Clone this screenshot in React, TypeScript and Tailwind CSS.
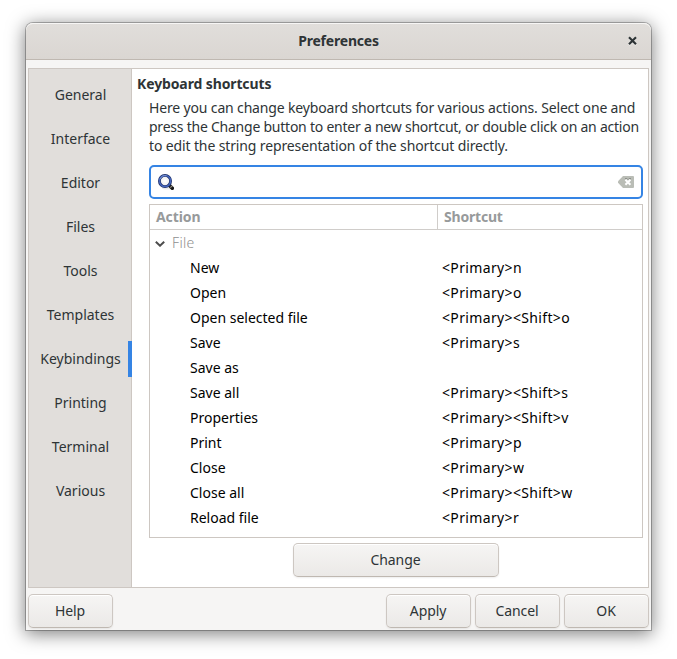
const tabs = ['General', 'Interface', 'Editor', 'Files', 'Tools', 'Templates', 'Keybindings', 'Printing', 'Terminal', 'Various'];

const shortcuts: [string, string][] = [
  ['New', '<Primary>n'],
  ['Open', '<Primary>o'],
  ['Open selected file', '<Primary><Shift>o'],
  ['Save', '<Primary>s'],
  ['Save as', ''],
  ['Save all', '<Primary><Shift>s'],
  ['Properties', '<Primary><Shift>v'],
  ['Print', '<Primary>p'],
  ['Close', '<Primary>w'],
  ['Close all', '<Primary><Shift>w'],
  ['Reload file', '<Primary>r'],
];

function Button({ label, className = 'w-[85px]' }: { label: string; className?: string }) {
  return (
    <button
      className={`flex h-[34px] shrink-0 items-center justify-center rounded-[5px] border border-[#cdc7c2] border-b-[#bfb8b1] bg-linear-to-b from-[#f6f5f4] to-[#ebe9e7] pr-px pb-[2px] tracking-[-0.1px] shadow-[inset_0_1px_0_#fff,0_1px_2px_rgba(0,0,0,0.07)] ${className}`}
    >
      {label}
    </button>
  );
}

function SearchIcon() {
  return (
    <svg width="16" height="16" viewBox="0 0 16 16">
      <defs>
        <radialGradient id="glass">
          <stop offset="0" stopColor="#fff" />
          <stop offset="0.65" stopColor="#f2f2f2" />
          <stop offset="1" stopColor="#c4c6cc" />
        </radialGradient>
      </defs>
      <ellipse cx="9" cy="14.6" rx="5" ry="1" fill="#000" opacity="0.08" />
      <path d="M11 11l3.3 3.3" stroke="#171717" strokeWidth="3.6" strokeLinecap="round" />
      <path d="M12.3 13.7l2-1.8" stroke="#99938a" strokeWidth="1.1" />
      <circle cx="7" cy="7" r="5.6" fill="url(#glass)" stroke="#1c2e66" strokeWidth="2.8" />
      <circle cx="7" cy="7" r="5.6" fill="none" stroke="#4565bb" strokeWidth="1.5" />
      <path d="M2.2 5.2A5.4 5.4 0 0 1 8.5 1.8" fill="none" stroke="#91a6dc" strokeWidth="0.8" />
    </svg>
  );
}

function ClearIcon() {
  return (
    <svg width="16" height="12" viewBox="0 0 16 12">
      <path d="M5 0H15Q16 0 16 1V11Q16 12 15 12H5L0 6.7V5.3Z" fill="#babdb6" />
      <path d="M7 2.5h2l1 1 1-1h2" fill="none" stroke="#8e918b" strokeWidth="1" />
      <path d="M7.4 3.7l5 5M12.4 3.7l-5 5" stroke="#fff" strokeWidth="2" />
    </svg>
  );
}

export default function App() {
  return (
    <div className="h-[659px] w-[677px] overflow-hidden bg-white pt-[23px] pl-[26px] font-['Noto_Sans',sans-serif] text-[14px] leading-[19px] text-[#2e3436]">
      <div className="flex h-[607px] w-[625px] flex-col rounded-t-[7px] bg-[#f6f5f4] shadow-[0_0_0_1px_rgba(0,0,0,0.26),0_3px_18px_1px_rgba(0,0,0,0.5)]">
        <header className="flex h-[37px] shrink-0 items-center rounded-t-[7px] border-b border-[#bfb8b1] bg-linear-to-b from-[#e1dedb] to-[#dad6d2] shadow-[inset_0_1px_0_#f7f6f5]">
          <h1 className="flex-1 pb-[2px] text-center font-bold tracking-[-0.2px]">Preferences</h1>
          <button className="-ml-[24px] mr-[13px] flex h-[10px] w-[11px]" aria-label="Close">
            <svg width="11" height="10" viewBox="0 0 11 10">
              <path d="M2 2l7 7M9 2L2 9" stroke="#fff" strokeWidth="2.2" opacity="0.6" />
              <path d="M2 1.2l7 7M9 1.2l-7 7" stroke="#2e3436" strokeWidth="2.2" />
            </svg>
          </button>
        </header>

        <main className="mx-[2px] mt-2 flex h-[520px] shrink-0 border border-[#cdc7c2] bg-white">
          <nav className="flex w-[103px] shrink-0 flex-col gap-2 border-r border-[#cdc7c2] bg-[#e1dedb] pt-2">
            {tabs.map((tab) => (
              <div
                key={tab}
                className={`-mr-px flex h-9 shrink-0 items-center justify-center border-r-4 pb-[2px] ${tab === 'Keybindings' ? 'border-[#3584e4]' : 'border-transparent'}`}
              >
                <span className="translate-x-[2px]">{tab}</span>
              </div>
            ))}
          </nav>

          <section className="flex min-w-0 flex-1 flex-col pt-[5px] pr-[5px] pl-[17px]">
            <h2 className="-ml-3 font-bold tracking-[-0.12px]">Keyboard shortcuts</h2>
            <p className="mt-[5px] whitespace-nowrap">
              <span className="block tracking-[-0.155px]">
                Here you can change keyboard shortcuts for various actions. Select one and
              </span>
              <span className="block tracking-[-0.235px]">
                press the Change button to enter a new shortcut, or double click on an action
              </span>
              <span className="block tracking-[-0.13px]">
                to edit the string representation of the shortcut directly.
              </span>
            </p>

            <div className="mt-[10px] flex h-[34px] shrink-0 items-center justify-between rounded-[5px] border-2 border-[#3584e4] px-[7px]">
              <SearchIcon />
              <ClearIcon />
            </div>

            <div className="mt-[5px] h-[334px] shrink-0 border border-[#cdc7c2] text-black">
              <div className="flex h-[25px] border-b border-[#d0cdca] pb-[2px] font-bold text-[#979a9b]">
                <div className="-mb-[2px] flex w-[288px] items-center border-r border-[#d0cdca] pb-[2px] pl-[6px] tracking-[-0.08px]">Action</div>
                <div className="flex items-center pl-[6px] tracking-[-0.2px]">Shortcut</div>
              </div>
              <div className="flex h-[25px] items-center pl-[5px] text-[#8f8f8f]">
                <svg width="10" height="6" viewBox="0 0 10 6" className="mt-[3px] mr-[7px]">
                  <path d="M0.8 0.8L5 4.7L9.2 0.8" fill="none" stroke="#4c4c4c" strokeWidth="2" />
                </svg>
                <span className="-mt-px font-light tracking-[0.3px]">File</span>
              </div>
              {shortcuts.map(([action, keys]) => (
                <div key={action} className="flex h-[25px] items-center pb-px pl-10">
                  <span className="w-[252px]">{action}</span>
                  <span className="tracking-[0.35px]">{keys}</span>
                </div>
              ))}
            </div>

            <div className="mt-[5px] flex justify-center">
              <Button label="Change" className="w-[206px]" />
            </div>
          </section>
        </main>

        <footer className="mx-[2px] mt-[6px] flex gap-1">
          <Button label="Help" />
          <div className="flex-1" />
          <Button label="Apply" />
          <Button label="Cancel" />
          <Button label="OK" />
        </footer>
      </div>
    </div>
  );
}
